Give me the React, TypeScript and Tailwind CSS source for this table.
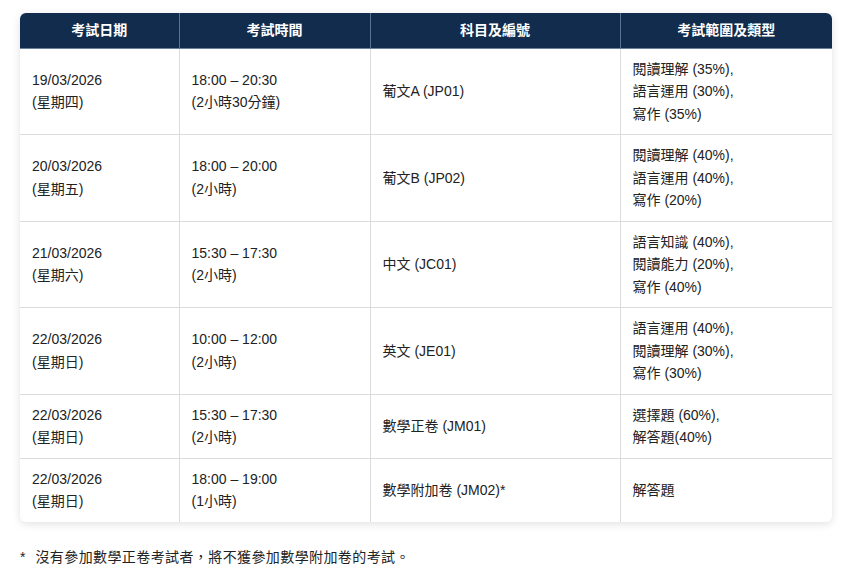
import React from 'react';

const rows = [
  { date: '19/03/2026', day: '(星期四)', time: '18:00 – 20:30', dur: '(2小時30分鐘)', subject: '葡文A (JP01)', scope: ['閱讀理解 (35%),', '語言運用 (30%),', '寫作 (35%)'] },
  { date: '20/03/2026', day: '(星期五)', time: '18:00 – 20:00', dur: '(2小時)', subject: '葡文B (JP02)', scope: ['閱讀理解 (40%),', '語言運用 (40%),', '寫作 (20%)'] },
  { date: '21/03/2026', day: '(星期六)', time: '15:30 – 17:30', dur: '(2小時)', subject: '中文 (JC01)', scope: ['語言知識 (40%),', '閱讀能力 (20%),', '寫作 (40%)'] },
  { date: '22/03/2026', day: '(星期日)', time: '10:00 – 12:00', dur: '(2小時)', subject: '英文 (JE01)', scope: ['語言運用 (40%),', '閱讀理解 (30%),', '寫作 (30%)'] },
  { date: '22/03/2026', day: '(星期日)', time: '15:30 – 17:30', dur: '(2小時)', subject: '數學正卷 (JM01)', scope: ['選擇題 (60%),', '解答題(40%)'] },
  { date: '22/03/2026', day: '(星期日)', time: '18:00 – 19:00', dur: '(1小時)', subject: '數學附加卷 (JM02)*', scope: ['解答題'] },
];

const headers = ['考試日期', '考試時間', '科目及編號', '考試範圍及類型'];

export default function App() {
  return (
    <div className="min-h-screen bg-white px-5 pt-[13px] text-[14px] leading-[22.5px] text-[#222] [font-family:'Liberation_Sans','Noto_Sans_CJK_TC',sans-serif]">
      <div className="overflow-hidden rounded-[6px] bg-white shadow-[0_2px_8px_rgba(0,0,0,0.12)]">
        <table className="w-full border-collapse table-fixed">
          <colgroup>
            <col className="w-[159px]" />
            <col className="w-[191px]" />
            <col className="w-[250px]" />
            <col className="w-[212px]" />
          </colgroup>
          <thead>
            <tr className="bg-[#112c4c] text-white">
              {headers.map((h, i) => (
                <th key={h} className={`h-[35px] border-b border-[#6a819c] font-bold text-center px-3 ${i > 0 ? 'border-l border-l-[#5a7392]' : ''}`}>{h}</th>
              ))}
            </tr>
          </thead>
          <tbody>
            {rows.map((r, idx) => (
              <tr key={idx} className={idx > 0 ? 'border-t border-[#dcdcdc]' : ''}>
                <td className="px-3 py-[9px] align-middle">{r.date}<br />{r.day}</td>
                <td className="px-3 py-[9px] align-middle border-l border-[#dcdcdc]">{r.time}<br />{r.dur}</td>
                <td className="px-3 py-[9px] align-middle border-l border-[#dcdcdc]">{r.subject}</td>
                <td className="px-3 py-[9px] align-middle border-l border-[#dcdcdc]">
                  {r.scope.map((s, i) => (<div key={i}>{s}</div>))}
                </td>
              </tr>
            ))}
          </tbody>
        </table>
      </div>
      <p className="mt-[24px] flex gap-[10px]">
        <span>*</span>
        <span className="tracking-[0.4px]">沒有參加數學正卷考試者，將不獲參加數學附加卷的考試。</span>
      </p>
    </div>
  );
}
